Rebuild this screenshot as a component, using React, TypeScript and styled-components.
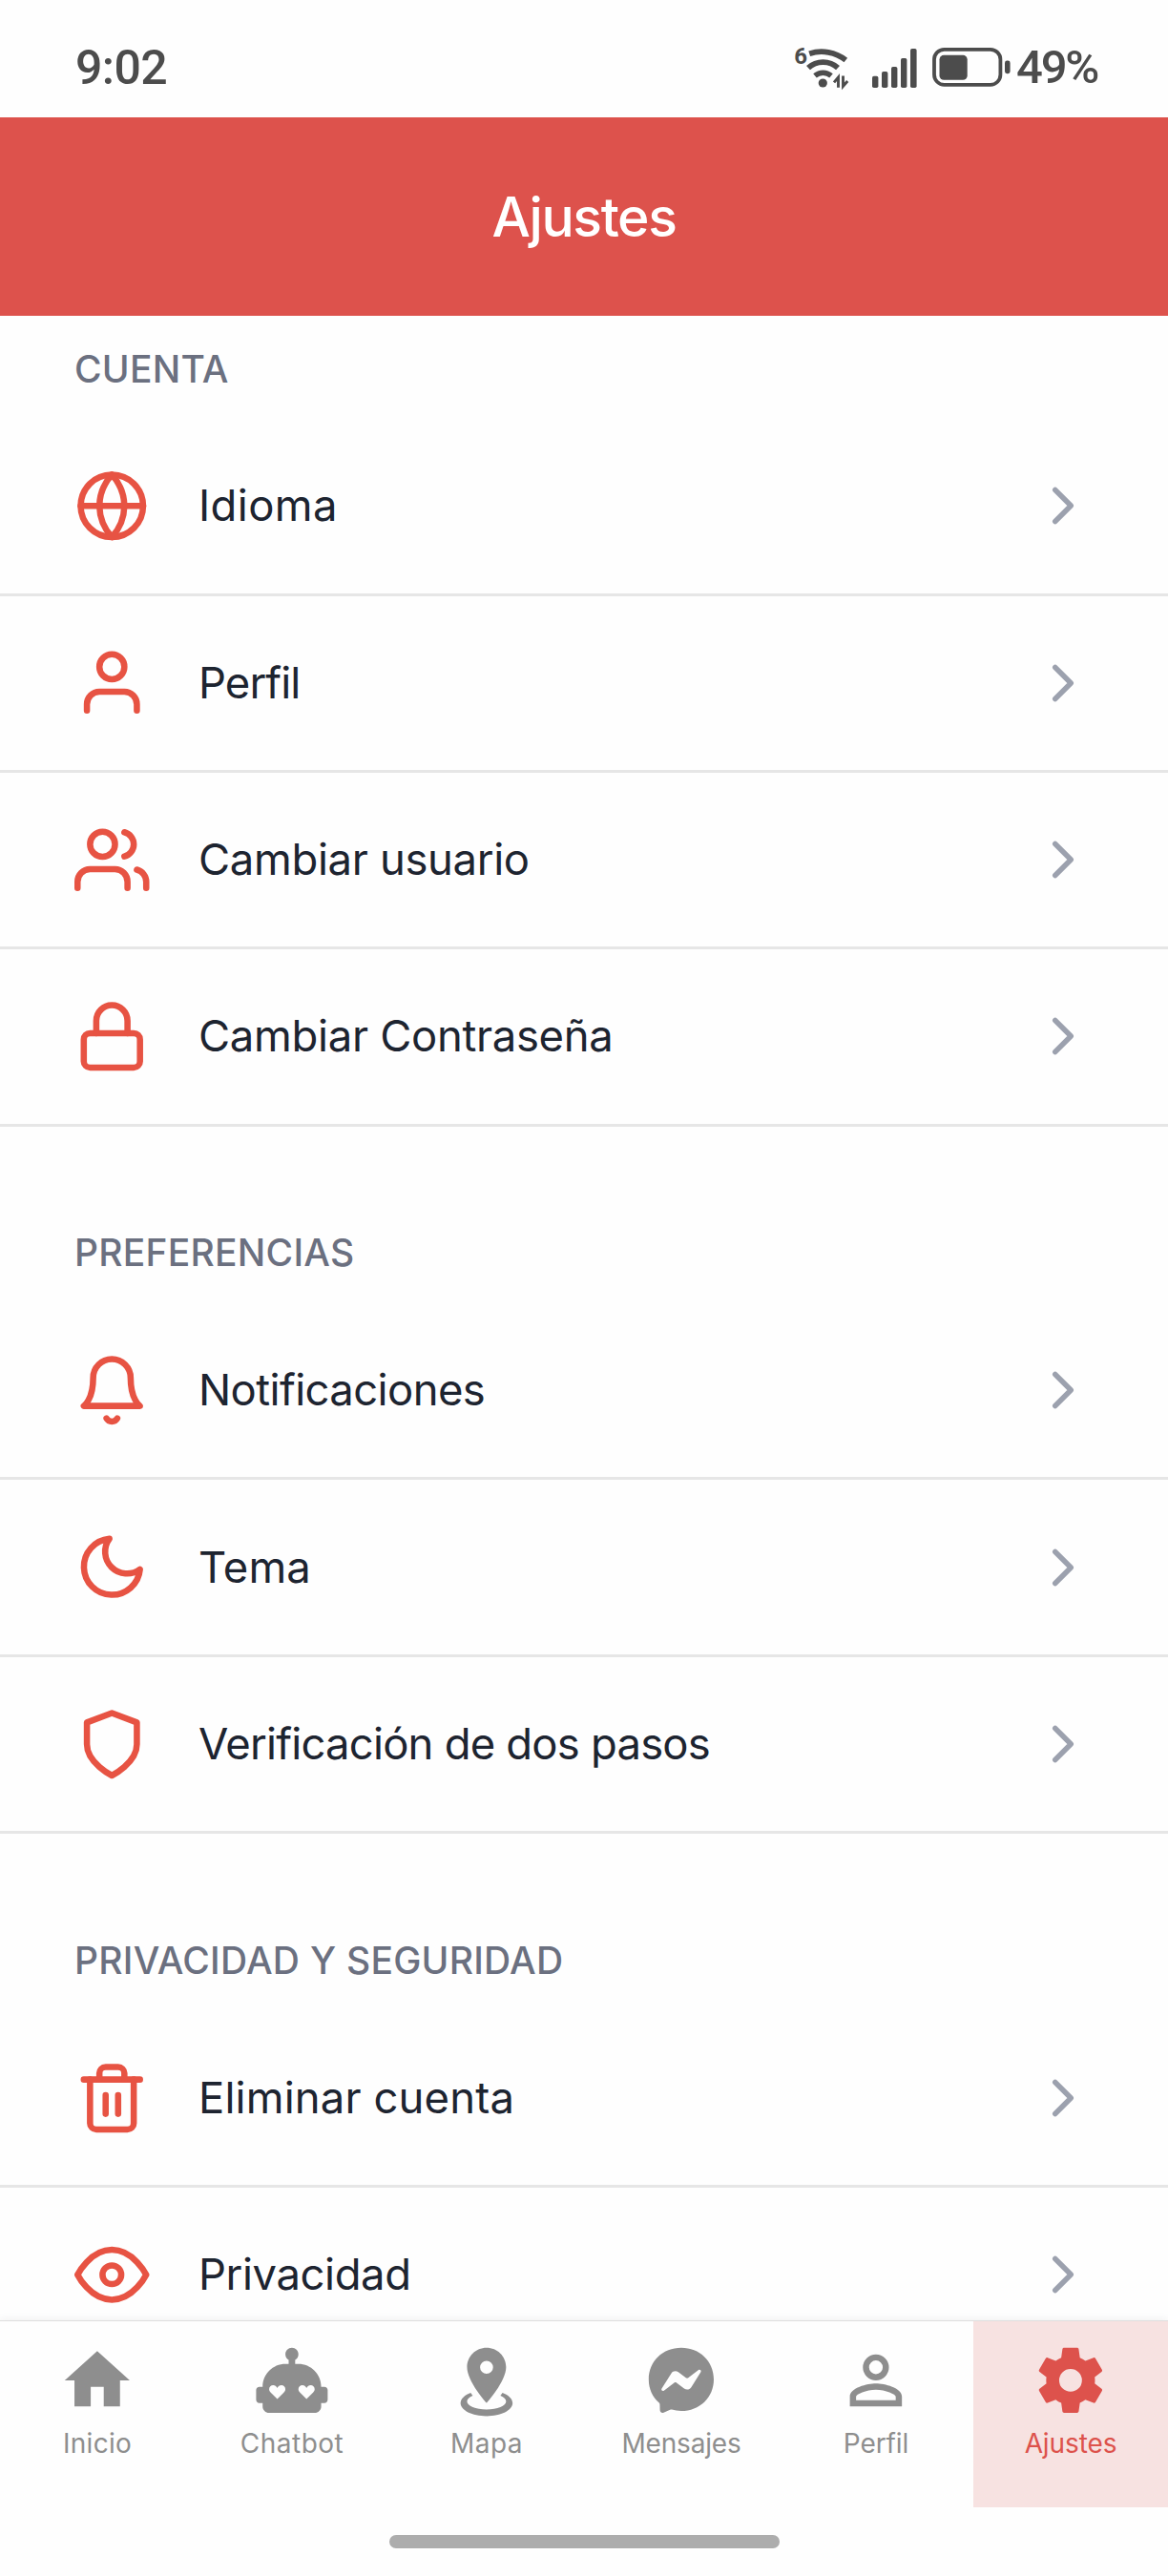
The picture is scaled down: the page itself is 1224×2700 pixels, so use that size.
import React from "react";
import styled, { createGlobalStyle } from "styled-components";
import type { IconType } from "react-icons";
import {
  FiBell,
  FiChevronRight,
  FiEye,
  FiGlobe,
  FiLock,
  FiMoon,
  FiShield,
  FiTrash2,
  FiUser,
  FiUsers,
} from "react-icons/fi";

const GlobalStyle = createGlobalStyle`
  *, *::before, *::after { box-sizing: border-box; }
  body { margin: 0; background: #fefefe; }
`;

const Screen = styled.div`
  display: flex;
  flex-direction: column;
  width: 1224px;
  height: 2700px;
  overflow: hidden;
  background: #fefefe;
  font-family: Inter, "Liberation Sans", sans-serif;
`;

const StatusBar = styled.div`
  display: flex;
  flex: none;
  align-items: center;
  height: 123px;
  padding: 18px 77px 0 79px;
  color: #4c4c4c;
  font-family: Roboto, "Liberation Sans", sans-serif;
  font-weight: 500;
  line-height: 1;
`;

const Clock = styled.span`
  font-size: 50px;
  letter-spacing: -0.6px;
`;

const StatusIcons = styled.div`
  display: flex;
  align-items: center;
  margin-left: auto;
`;

const Battery = styled.span`
  width: 82px;
  font-size: 49px;
  letter-spacing: -2.2px;
  white-space: nowrap;
`;

const Header = styled.header`
  display: flex;
  flex: none;
  align-items: center;
  justify-content: center;
  height: 208px;
  padding-top: 2px;
  background: #dd524c;
`;

const Title = styled.h1`
  margin: 0;
  color: #fff;
  font-size: 57px;
  font-weight: 500;
  letter-spacing: -1.4px;
  line-height: 70px;
`;

const Content = styled.main`
  flex: 1;
  min-height: 0;
  overflow: hidden;
`;

const Section = styled.section`
  & + & {
    margin-top: 77.4px;
  }
`;

const SectionTitle = styled.h2`
  display: flex;
  align-items: center;
  height: 108.2px;
  margin: 0;
  padding: 2px 78px 0;
  color: #6b7080;
  font-size: 39px;
  font-weight: 500;
  letter-spacing: 0.25px;
`;

const Row = styled.div`
  display: flex;
  align-items: center;
  height: 185.33px;
  padding: 0 77.5px 0 78px;
  border-bottom: 3px solid #e6e6e6;
`;

const RowIcon = styled.span`
  display: flex;
  flex: none;
  margin-right: 51.5px;
  color: #e75343;
`;

const RowLabel = styled.span<{ $tracking: number }>`
  flex: 1;
  color: #1d2430;
  font-size: 45.4px;
  font-weight: 400;
  letter-spacing: ${(p) => p.$tracking}px;
  line-height: 56px;
  white-space: nowrap;
`;

const Chevron = styled(FiChevronRight)`
  flex: none;
  color: #9ca1ae;
`;

const BottomNav = styled.nav`
  position: relative;
  display: grid;
  flex: none;
  grid-template-columns: repeat(6, 1fr);
  height: 196px;
  border-top: 1px solid #dedede;
  background: #fefefe;
  box-shadow: 0 0 10px rgba(0, 0, 0, 0.07);
  clip-path: inset(-12px 0 0 0);
`;

const Tab = styled.div<{ $active?: boolean }>`
  display: flex;
  flex-direction: column;
  align-items: center;
  padding-top: 21px;
  background: ${(p) => (p.$active ? "#f7e2e1" : "transparent")};
  color: ${(p) => (p.$active ? "#dd524c" : "#8e8e8e")};
`;

const TabLabel = styled.span<{ $tracking: number }>`
  margin-top: 8px;
  font-size: 28px;
  font-weight: 400;
  letter-spacing: ${(p) => p.$tracking}px;
  line-height: 34px;
`;

const GestureArea = styled.div`
  display: flex;
  flex: none;
  justify-content: center;
  height: 72px;
  padding-top: 29px;
`;

const GestureHandle = styled.div`
  width: 409px;
  height: 14px;
  border-radius: 7px;
  background: #adadad;
`;

type Item = { icon: IconType; label: string; tracking: number };

const sections: { title: string; items: Item[] }[] = [
  {
    title: "CUENTA",
    items: [
      { icon: FiGlobe, label: "Idioma", tracking: 0.4 },
      { icon: FiUser, label: "Perfil", tracking: -0.9 },
      { icon: FiUsers, label: "Cambiar usuario", tracking: -0.33 },
      { icon: FiLock, label: "Cambiar Contraseña", tracking: -0.3 },
    ],
  },
  {
    title: "PREFERENCIAS",
    items: [
      { icon: FiBell, label: "Notificaciones", tracking: -0.58 },
      { icon: FiMoon, label: "Tema", tracking: 0.1 },
      { icon: FiShield, label: "Verificación de dos pasos", tracking: -0.77 },
    ],
  },
  {
    title: "PRIVACIDAD Y SEGURIDAD",
    items: [
      { icon: FiTrash2, label: "Eliminar cuenta", tracking: 0.15 },
      { icon: FiEye, label: "Privacidad", tracking: -0.4 },
    ],
  },
];

const tabs: { label: string; path: string; tracking: number; active?: boolean }[] = [
  {
    label: "Inicio",
    tracking: 0.3,
    path: "M10 20V14H14V20H19V12H22L12 3L2 12H5V20H10Z",
  },
  {
    label: "Chatbot",
    tracking: 0.5,
    path: "M22 14H21C21 10.13 17.87 7 14 7H13V5.73C13.6 5.39 14 4.74 14 4C14 2.9 13.11 2 12 2S10 2.9 10 4C10 4.74 10.4 5.39 11 5.73V7H10C6.13 7 3 10.13 3 14H2C1.45 14 1 14.45 1 15V18C1 18.55 1.45 19 2 19H3V20C3 21.11 3.9 22 5 22H19C20.11 22 21 21.11 21 20V19H22C22.55 19 23 18.55 23 18V15C23 14.45 22.55 14 22 14ZM7.5 17.75L5.5 15.75C5.15 15.4 5 15.1 5 14.75C5 14.05 5.55 13.5 6.25 13.5C6.75 13.5 7.25 13.8 7.5 14.4C7.75 13.8 8.25 13.5 8.75 13.5C9.45 13.5 10 14.05 10 14.75C10 15.1 9.85 15.4 9.5 15.75L7.5 17.75ZM16.5 17.75L14.5 15.75C14.15 15.4 14 15.1 14 14.75C14 14.05 14.55 13.5 15.25 13.5C15.75 13.5 16.25 13.8 16.5 14.4C16.75 13.8 17.25 13.5 17.75 13.5C18.45 13.5 19 14.05 19 14.75C19 15.1 18.85 15.4 18.5 15.75L16.5 17.75Z",
  },
  {
    label: "Mapa",
    tracking: 0.4,
    path: "M12 2C15.31 2 18 4.66 18 7.95C18 12.41 12 19 12 19S6 12.41 6 7.95C6 4.66 8.69 2 12 2M12 6A2 2 0 0 0 10 8A2 2 0 0 0 12 10A2 2 0 0 0 14 8A2 2 0 0 0 12 6M20 19C20 21.21 16.42 23 12 23C7.58 23 4 21.21 4 19C4 17.71 5.22 16.56 7.11 15.83L7.75 16.74C6.67 17.19 6 17.81 6 18.5C6 19.88 8.69 21 12 21C15.31 21 18 19.88 18 18.5C18 17.81 17.33 17.19 16.25 16.74L16.89 15.83C18.78 16.56 20 17.71 20 19Z",
  },
  {
    label: "Mensajes",
    tracking: -0.2,
    path: "M12 2C6.36 2 2 6.13 2 11.7C2 14.61 3.19 17.14 5.14 18.87C5.3 19 5.4 19.22 5.41 19.44L5.46 21.22C5.5 21.79 6.07 22.16 6.59 21.93L8.57 21.06C8.74 21 8.93 20.97 9.1 21C10 21.27 11 21.4 12 21.4C17.64 21.4 22 17.27 22 11.7C22 6.13 17.64 2 12 2M18 9.46L15.07 14.13C14.6 14.86 13.6 15.05 12.9 14.5L10.56 12.77C10.35 12.61 10.05 12.61 9.84 12.77L6.68 15.17C6.26 15.5 5.71 15 6 14.54L8.93 9.87C9.4 9.14 10.4 8.95 11.1 9.47L13.44 11.23C13.66 11.39 13.95 11.39 14.16 11.23L17.32 8.83C17.74 8.5 18.29 9 18 9.46Z",
  },
  {
    label: "Perfil",
    tracking: -0.1,
    path: "M12 4A4 4 0 0 1 16 8A4 4 0 0 1 12 12A4 4 0 0 1 8 8A4 4 0 0 1 12 4M12 5.9A2.1 2.1 0 0 0 9.9 8A2.1 2.1 0 0 0 12 10.1A2.1 2.1 0 0 0 14.1 8A2.1 2.1 0 0 0 12 5.9M12 13C14.67 13 20 14.33 20 17V20H4V17C4 14.33 9.33 13 12 13M12 14.9C9.03 14.9 5.9 16.36 5.9 17V18.1H18.1V17C18.1 16.36 14.97 14.9 12 14.9Z",
  },
  {
    label: "Ajustes",
    tracking: -0.1,
    active: true,
    path: "M12 15.5A3.5 3.5 0 0 1 8.5 12A3.5 3.5 0 0 1 12 8.5A3.5 3.5 0 0 1 15.5 12A3.5 3.5 0 0 1 12 15.5M19.43 12.97C19.47 12.65 19.5 12.33 19.5 12C19.5 11.67 19.47 11.34 19.43 11L21.54 9.37C21.73 9.22 21.78 8.95 21.66 8.73L19.66 5.27C19.54 5.05 19.27 4.96 19.05 5.05L16.56 6.05C16.04 5.66 15.5 5.32 14.87 5.07L14.5 2.42C14.46 2.18 14.25 2 14 2H10C9.75 2 9.54 2.18 9.5 2.42L9.13 5.07C8.5 5.32 7.96 5.66 7.44 6.05L4.95 5.05C4.73 4.96 4.46 5.05 4.34 5.27L2.34 8.73C2.21 8.95 2.27 9.22 2.46 9.37L4.57 11C4.53 11.34 4.5 11.67 4.5 12C4.5 12.33 4.53 12.65 4.57 12.97L2.46 14.63C2.27 14.78 2.21 15.05 2.34 15.27L4.34 18.73C4.46 18.95 4.73 19.03 4.95 18.95L7.44 17.94C7.96 18.34 8.5 18.68 9.13 18.93L9.5 21.58C9.54 21.82 9.75 22 10 22H14C14.25 22 14.46 21.82 14.5 21.58L14.87 18.93C15.5 18.67 16.04 18.34 16.56 17.94L19.05 18.95C19.27 19.03 19.54 18.95 19.66 18.73L21.66 15.27C21.78 15.05 21.73 14.78 21.54 14.63L19.43 12.97Z",
  },
];

function WifiIcon() {
  return (
    <svg width="81" height="50" viewBox="31 25 81 50" fill="none" stroke="currentColor">
      <text x="31.3" y="45.6" fontSize="24" fontWeight="700" fill="currentColor" stroke="none">
        6
      </text>
      <path d="M47.2 35.2A41 41 0 0 1 85.3 42" strokeWidth="5.8" />
      <path d="M46 50.2A23 23 0 0 1 77 50.2" strokeWidth="5.8" />
      <path d="M53 58.4A13 13 0 0 1 70 58.4" strokeWidth="5.4" />
      <circle cx="61.3" cy="66" r="4.6" fill="currentColor" stroke="none" />
      <path d="M77.5 70.8V60L73 65.4M82.5 58.6V69.4L87.2 64" strokeWidth="2.9" />
    </svg>
  );
}

function SignalIcon() {
  return (
    <svg width="64" height="50" viewBox="113 25 64 50" fill="currentColor">
      <rect x="114" y="58.7" width="6.4" height="12.3" rx="1.8" />
      <rect x="124" y="54" width="6.4" height="17" rx="1.8" />
      <rect x="134" y="49" width="6.4" height="22" rx="1.8" />
      <rect x="144" y="40" width="6.4" height="31" rx="1.8" />
      <rect x="154" y="30" width="6.6" height="41" rx="1.8" />
    </svg>
  );
}

function BatteryIcon() {
  return (
    <svg width="88" height="50" viewBox="177 25 88 50">
      <rect x="179" y="30.8" width="69.4" height="37" rx="10.5" fill="none" stroke="currentColor" strokeWidth="3.8" />
      <rect x="184.5" y="36.8" width="29.2" height="26" rx="4.6" fill="currentColor" />
      <rect x="253" y="42.6" width="5.6" height="13.6" rx="2.4" fill="currentColor" />
    </svg>
  );
}

export default function App() {
  return (
    <>
      <GlobalStyle />
      <Screen>
        <StatusBar>
          <Clock>9:02</Clock>
          <StatusIcons>
            <WifiIcon />
            <SignalIcon />
            <BatteryIcon />
            <Battery>49%</Battery>
          </StatusIcons>
        </StatusBar>
        <Header>
          <Title>Ajustes</Title>
        </Header>
        <Content>
          {sections.map((section) => (
            <Section key={section.title}>
              <SectionTitle>{section.title}</SectionTitle>
              {section.items.map(({ icon: Icon, label, tracking }) => (
                <Row key={label}>
                  <RowIcon>
                    <Icon size={78.5} />
                  </RowIcon>
                  <RowLabel $tracking={tracking}>{label}</RowLabel>
                  <Chevron size={66} />
                </Row>
              ))}
            </Section>
          ))}
        </Content>
        <BottomNav>
          {tabs.map((tab) => (
            <Tab key={tab.label} $active={tab.active}>
              <svg width="81.8" height="81.8" viewBox="0 0 24 24" fill="currentColor" fillRule="evenodd">
                <path d={tab.path} />
              </svg>
              <TabLabel $tracking={tab.tracking}>{tab.label}</TabLabel>
            </Tab>
          ))}
        </BottomNav>
        <GestureArea>
          <GestureHandle />
        </GestureArea>
      </Screen>
    </>
  );
}
